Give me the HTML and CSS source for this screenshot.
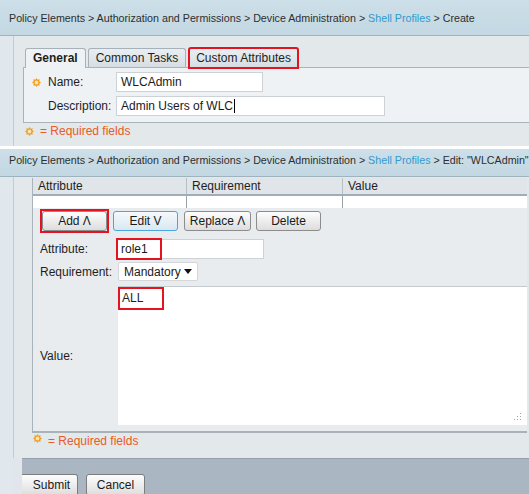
FILE: index.html
```html
<!DOCTYPE html>
<html>
<head>
<meta charset="utf-8">
<link rel="stylesheet" href="styles.css">
</head>
<body>
<div class="shot shot1">
  <div class="crumbs">Policy Elements &gt; Authorization and Permissions &gt; Device Administration &gt;&nbsp;<span class="lnk">Shell Profiles</span>&nbsp;&gt; Create</div>
  <div class="body">
    <div class="leftstrip"></div>
    <div class="panel p1">
      <div class="tabs">
        <div class="tab active">General</div>
        <div class="tab">Common Tasks</div>
        <div class="tab hl">Custom Attributes</div>
      </div>
      <div class="tabbox">
        <div class="row">
          <span class="starslot"><svg class="star" viewBox="0 0 10 10"><polygon points="10,5 8.05,6.26 8.54,8.54 6.26,8.05 5,10 3.74,8.05 1.46,8.54 1.95,6.26 0,5 1.95,3.74 1.46,1.46 3.74,1.95 5,0 6.26,1.95 8.54,1.46 8.05,3.74" fill="#f39a1e"/><circle cx="5" cy="5" r="2.1" fill="#fde6a6"/></svg></span>
          <span class="lbl">Name:</span>
          <div class="input w-name">WLCAdmin</div>
        </div>
        <div class="row">
          <span class="starslot"></span>
          <span class="lbl">Description:</span>
          <div class="input w-desc">Admin Users of WLC<span class="caret"></span></div>
        </div>
      </div>
      <div class="req req1"><svg class="star" viewBox="0 0 10 10"><polygon points="10,5 8.05,6.26 8.54,8.54 6.26,8.05 5,10 3.74,8.05 1.46,8.54 1.95,6.26 0,5 1.95,3.74 1.46,1.46 3.74,1.95 5,0 6.26,1.95 8.54,1.46 8.05,3.74" fill="#f39a1e"/><circle cx="5" cy="5" r="2.1" fill="#fde6a6"/></svg><span>= Required fields</span></div>
    </div>
  </div>
</div>
<div class="gap"></div>
<div class="shot shot2">
  <div class="crumbs c2">Policy Elements &gt; Authorization and Permissions &gt; Device Administration &gt;&nbsp;<span class="lnk">Shell Profiles</span>&nbsp;&gt; Edit: "WLCAdmin"</div>
  <div class="body">
    <div class="leftstrip"></div>
    <div class="col">
      <div class="panel p2">
        <div class="box">
          <div class="grid ghead">
            <div class="cell">Attribute</div>
            <div class="cell">Requirement</div>
            <div class="cell">Value</div>
          </div>
          <div class="grid gbody">
            <div class="cell"></div>
            <div class="cell"></div>
            <div class="cell"></div>
          </div>
          <div class="form">
            <div class="btns">
              <span class="redbox"><span class="btn b-add">Add Λ</span></span>
              <span class="btn b-edit focus">Edit V</span>
              <span class="btn b-rep">Replace Λ</span>
              <span class="btn b-del">Delete</span>
            </div>
            <div class="frow r-attr">
              <span class="flbl">Attribute:</span>
              <div class="input w-attr"><span class="redin">role1</span></div>
            </div>
            <div class="frow r-req">
              <span class="flbl">Requirement:</span>
              <div class="select"><span>Mandatory</span><svg class="arrow" viewBox="0 0 8 5"><polygon points="0,0 8,0 4,5" fill="#111"/></svg></div>
            </div>
            <div class="frow vrow">
              <span class="flbl">Value:</span>
              <div class="textarea"><span class="redin redall">ALL</span><svg class="grip" viewBox="0 0 8 8"><g fill="#9aa"><rect x="6" y="0" width="1" height="1"/><rect x="6" y="3" width="1" height="1"/><rect x="3" y="3" width="1" height="1"/><rect x="6" y="6" width="1" height="1"/><rect x="3" y="6" width="1" height="1"/><rect x="0" y="6" width="1" height="1"/></g></svg></div>
            </div>
          </div>
        </div>
        <div class="req req2"><svg class="star" viewBox="0 0 10 10"><polygon points="10,5 8.05,6.26 8.54,8.54 6.26,8.05 5,10 3.74,8.05 1.46,8.54 1.95,6.26 0,5 1.95,3.74 1.46,1.46 3.74,1.95 5,0 6.26,1.95 8.54,1.46 8.05,3.74" fill="#f39a1e"/><circle cx="5" cy="5" r="2.1" fill="#fde6a6"/></svg><span>= Required fields</span></div>
      </div>
      <div class="footer">
        <span class="btn b-submit">Submit</span>
        <span class="btn b-cancel">Cancel</span>
      </div>
    </div>
  </div>
</div>
</body>
</html>
```
FILE: styles.css
```css
html, body {
  margin: 0;
  padding: 0;
}
body {
  width: 529px;
  height: 494px;
  overflow: hidden;
  background: #ffffff;
  font-family: "Liberation Sans", Arial, sans-serif;
  font-size: 12px;
  color: #1e1e1e;
}
.shot {
  display: flex;
  flex-direction: column;
}
.shot1 {
  height: 146px;
}
.gap {
  height: 3px;
  background: #ffffff;
}
.shot2 {
  height: 345px;
}
.crumbs {
  height: 36px;
  flex: none;
  box-sizing: border-box;
  border-bottom: 1px solid #9fb3be;
  background: linear-gradient(#cddfe8, #c3d8e3);
  padding-left: 9px;
  display: flex;
  align-items: center;
  font-size: 10.7px;
  color: #2e2e2e;
  white-space: nowrap;
  overflow: hidden;
}
.crumbs.c2 {
  height: 28px;
  padding-bottom: 5px;
}
.lnk {
  color: #3199cf;
}
.body {
  flex: 1;
  display: flex;
  min-height: 0;
}
.leftstrip {
  width: 13px;
  flex: none;
  background: #e0e7ed;
}
.panel {
  flex: 1;
  border-left: 1px solid #c4ccd3;
  background: #e3e8eb;
}
.p1 {
  padding: 11px 0 0 9px;
  display: flex;
  flex-direction: column;
}
.tabs {
  display: flex;
  align-items: flex-end;
  gap: 2px;
  padding-left: 2px;
  height: 20px;
}
.tab {
  height: 18px;
  line-height: 18px;
  padding: 0 7px;
  border: 1px solid #a7b1b9;
  border-bottom: none;
  border-radius: 3px 3px 0 0;
  background: linear-gradient(#e9eef1, #d7dee3);
  color: #1e1e1e;
}
.tab.active {
  height: 19px;
  margin-bottom: -1px;
  background: #eef2f5;
  font-weight: bold;
  position: relative;
  z-index: 1;
}
.tab.hl {
  border: 2px solid #e3141f;
  padding: 0 6px;
  height: 18px;
  line-height: 18px;
  margin-bottom: -2px;
  position: relative;
  z-index: 1;
}
.tabbox {
  border: 1px solid #a9b3ba;
  border-right: none;
  background: #eef2f5;
  padding: 4px 0 6px 0;
  display: flex;
  flex-direction: column;
  gap: 4px;
}
.row {
  display: flex;
  align-items: center;
  height: 20px;
}
.starslot {
  width: 9px;
  margin-left: 8px;
  margin-right: 7px;
  display: flex;
  align-items: center;
}
.star {
  width: 9px;
  height: 9px;
  display: block;
}
.lbl {
  width: 68px;
}
.input {
  height: 20px;
  box-sizing: border-box;
  background: #ffffff;
  border: 1px solid #cdd2d6;
  padding-left: 4px;
  display: flex;
  align-items: center;
  color: #1a1a1a;
}
.w-name { width: 147px; }
.w-desc { width: 269px; }
.caret {
  display: inline-block;
  width: 1px;
  height: 14px;
  background: #000;
  margin-left: 1px;
}
.req {
  display: flex;
  align-items: center;
  color: #ec5a25;
  font-size: 12px;
}
.req1 {
  height: 16px;
  margin-left: 2px;
}
.req .star {
  margin-right: 6px;
}
/* second shot */
.col {
  flex: 1;
  display: flex;
  flex-direction: column;
  background: #e0e6eb;
}
.p2 {
  flex: none;
  height: 281px;
  box-sizing: border-box;
  padding: 1px 2px 0 18px;
  display: flex;
  flex-direction: column;
}
.box {
  border-left: 1px solid #aab3ba;
  border-bottom: 2px solid #a9b2b9;
  background: #e8ecef;
  display: flex;
  flex-direction: column;
}
.grid {
  display: grid;
  grid-template-columns: 154px 156px 1fr;
}
.ghead {
  height: 18px;
  box-sizing: border-box;
  background: #dfe5e9;
  border-bottom: 2px solid #a3adb5;
}
.ghead .cell {
  padding-left: 5px;
  line-height: 16px;
  border-right: 1px solid #b8c0c6;
}
.gbody {
  height: 12px;
  background: #ffffff;
}
.gbody .cell {
  border-right: 1px solid #9aa3aa;
}
.ghead .cell:last-child,
.gbody .cell:last-child {
  border-right: none;
}
.form {
  padding: 1px 0 6px 7px;
  display: flex;
  flex-direction: column;
}
.btns {
  display: flex;
  align-items: center;
  height: 24px;
}
.btn {
  display: inline-flex;
  align-items: center;
  justify-content: center;
  box-sizing: border-box;
  height: 20px;
  border: 1px solid #8c8c8c;
  border-radius: 3px;
  background: linear-gradient(#fdfdfd, #dddddd);
  color: #1a1a1a;
  font-size: 12px;
}
.redbox {
  display: inline-flex;
  border: 2px solid #e3141f;
}
.b-add { width: 65px; }
.b-edit { width: 65px; margin-left: 4px; }
.b-rep { width: 67px; margin-left: 6px; }
.b-del { width: 65px; margin-left: 5px; }
.btn.focus {
  border-color: #4ba5dd;
  background: linear-gradient(#f4f9fc, #d9e8f2);
}
.frow {
  display: flex;
  align-items: center;
}
.r-attr {
  margin-top: 6px;
}
.r-req {
  margin-top: 3px;
}
.flbl {
  width: 76px;
}
.w-attr {
  width: 148px;
  padding-left: 0;
  align-items: stretch;
  border-left: none;
}
.redin {
  display: inline-flex;
  align-items: center;
  box-sizing: border-box;
  border: 2px solid #e3141f;
  padding-left: 3px;
  width: 46px;
  margin-top: -2px;
  margin-bottom: -2px;
}
.select {
  margin-left: 2px;
  width: 80px;
  height: 19px;
  box-sizing: border-box;
  background: #ffffff;
  border: 1px solid #d3d7da;
  border-radius: 2px;
  display: flex;
  align-items: center;
  justify-content: space-between;
  padding: 0 5px 0 5px;
  color: #1a1a1a;
}
.arrow {
  width: 8px;
  height: 5px;
}
.vrow {
  margin-top: 5px;
}
.textarea {
  position: relative;
  margin-left: 2px;
  flex: 1;
  height: 139px;
  box-sizing: border-box;
  background: #ffffff;
  border-top: 1px solid #c5cacf;
  display: flex;
  align-items: flex-start;
}
.redall {
  height: 23px;
  padding-left: 2px;
  margin: 0;
  align-items: flex-start;
  padding-top: 2px;
}
.grip {
  position: absolute;
  right: 5px;
  bottom: 4px;
  width: 8px;
  height: 8px;
}
.req2 {
  flex: 1;
  align-items: flex-start;
  margin-left: 1px;
  padding-top: 1px;
}
.footer {
  flex: 1;
  margin-left: 9px;
  border-top: 1px solid #93a0ac;
  background: #aab6c2;
  display: flex;
  align-items: flex-start;
  padding-top: 15px;
  gap: 8px;
}
.footer .btn {
  height: 22px;
  border-color: #7d7d7d;
}
.b-submit {
  width: 56px;
  border-left: none;
  border-radius: 0 3px 3px 0;
  padding-left: 4px;
}
.b-cancel {
  width: 59px;
}
```
